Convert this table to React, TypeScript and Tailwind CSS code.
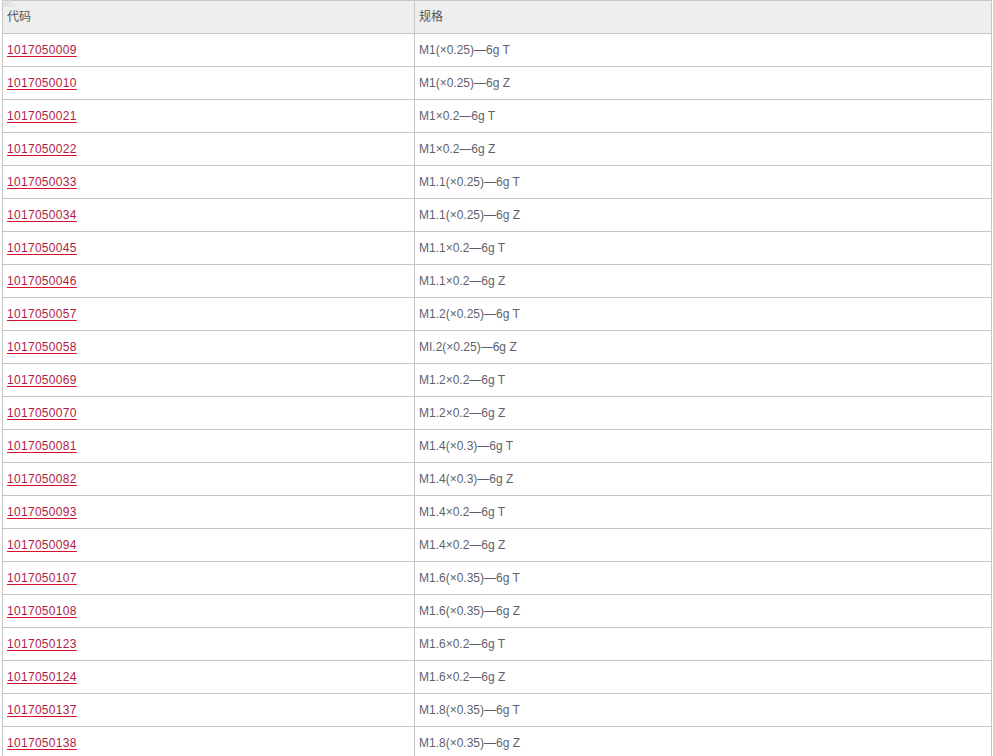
import React from "react";

const rows: [string, string][] = [
  ["1017050009", "M1(×0.25)—6g T"],
  ["1017050010", "M1(×0.25)—6g Z"],
  ["1017050021", "M1×0.2—6g T"],
  ["1017050022", "M1×0.2—6g Z"],
  ["1017050033", "M1.1(×0.25)—6g T"],
  ["1017050034", "M1.1(×0.25)—6g Z"],
  ["1017050045", "M1.1×0.2—6g T"],
  ["1017050046", "M1.1×0.2—6g Z"],
  ["1017050057", "M1.2(×0.25)—6g T"],
  ["1017050058", "MI.2(×0.25)—6g Z"],
  ["1017050069", "M1.2×0.2—6g T"],
  ["1017050070", "M1.2×0.2—6g Z"],
  ["1017050081", "M1.4(×0.3)—6g T"],
  ["1017050082", "M1.4(×0.3)—6g Z"],
  ["1017050093", "M1.4×0.2—6g T"],
  ["1017050094", "M1.4×0.2—6g Z"],
  ["1017050107", "M1.6(×0.35)—6g T"],
  ["1017050108", "M1.6(×0.35)—6g Z"],
  ["1017050123", "M1.6×0.2—6g T"],
  ["1017050124", "M1.6×0.2—6g Z"],
  ["1017050137", "M1.8(×0.35)—6g T"],
  ["1017050138", "M1.8(×0.35)—6g Z"],
];

const App = () => {
  return (
    <div className="h-[756px] overflow-hidden bg-white font-['Liberation_Sans','Noto_Sans_CJK_SC',sans-serif] text-[12px]">
      <div className="relative ml-[2px] w-[990px] border-l border-r border-[#c6c6c6]">
        {/* clipped caption glyph */}
        <span className="absolute -top-[5px] -left-[2px] text-[12px] leading-none text-[#f4f4f4] [text-shadow:0_0_1px_#999]">
          数
        </span>

        {/* Header */}
        <div className="flex h-[34px] border-t border-b border-[#c6c6c6] bg-[#eeeeee] text-[#555555]">
          <div className="flex w-[412px] items-center border-r border-[#c6c6c6] pl-[4px]">代码</div>
          <div className="flex flex-1 items-center pl-[4px]">规格</div>
        </div>

        {/* Rows */}
        {rows.map(([code, spec]) => (
          <div key={code} className="flex h-[33px] border-b border-[#c6c6c6]">
            <div className="flex w-[412px] items-center border-r border-[#c6c6c6] pl-[4px]">
              <a
                href="#"
                className="tracking-[0.3px] text-[#b01c46] underline decoration-[#d8102c] underline-offset-[2px]"
              >
                {code}
              </a>
            </div>
            <div className="flex flex-1 items-center pl-[4px] text-[#5f5f6e]">{spec}</div>
          </div>
        ))}
      </div>
    </div>
  );
};

export default App;
